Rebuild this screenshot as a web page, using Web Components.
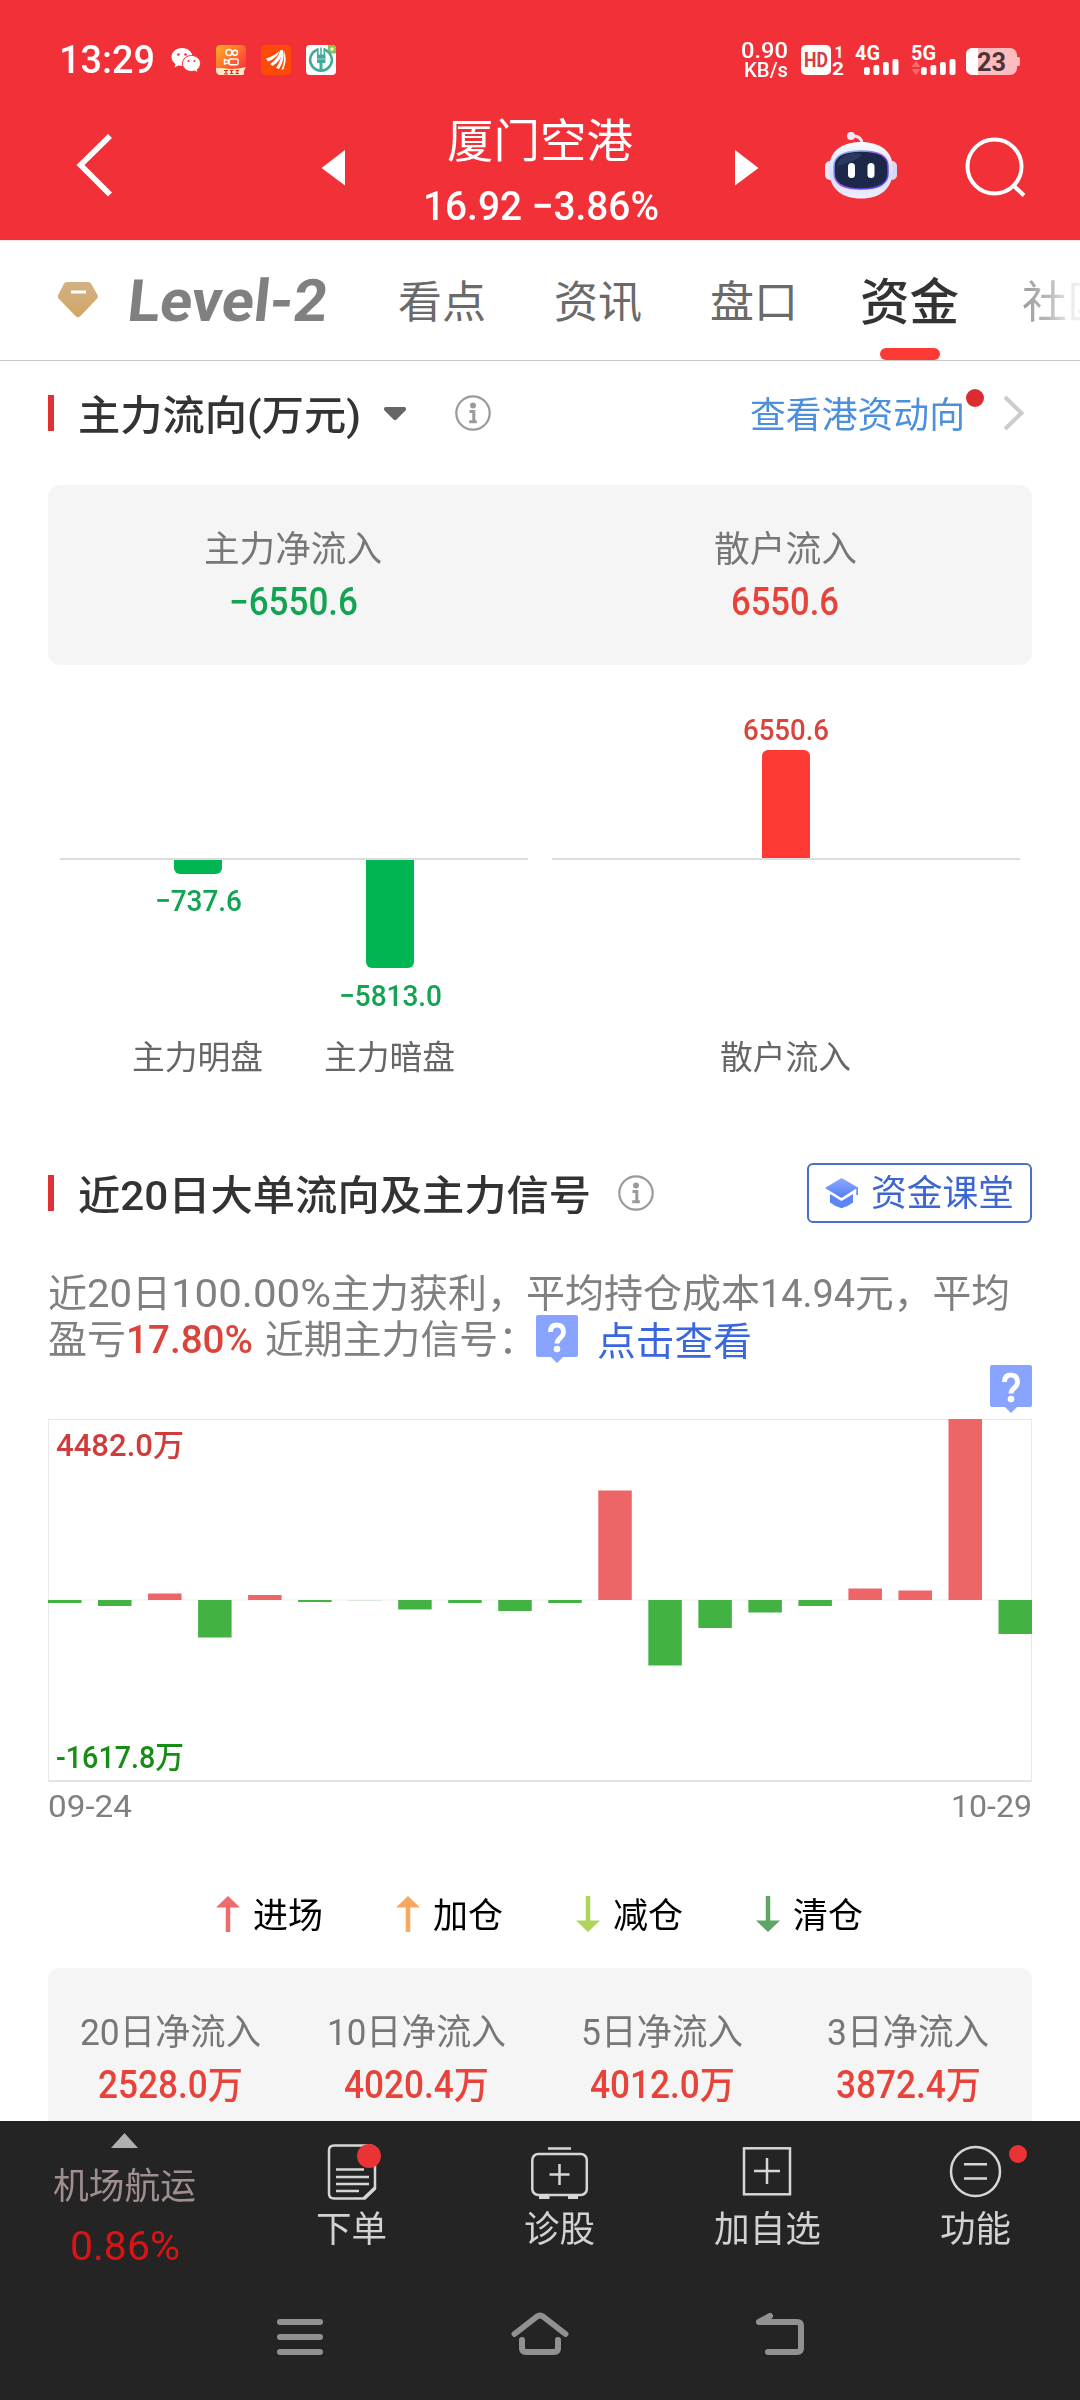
<!DOCTYPE html>
<html lang="zh-CN">
<head>
<meta charset="utf-8">
<title>厦门空港</title>
<style>
html,body{margin:0;padding:0;background:#fff}
body{width:1080px;height:2400px;overflow:hidden;font-family:Roboto,"Noto Sans CJK SC",sans-serif;color:#333}
</style>
</head>
<body>
<stock-page></stock-page>
<script>
const fits = new Set();
function define(name, html, after){
  const t = document.createElement('template');
  t.innerHTML = '<style>*{box-sizing:border-box}svg{display:block;flex:none}</style>' + html;
  customElements.define(name, class extends HTMLElement{
    connectedCallback(){
      if(this.shadowRoot) return;
      this.attachShadow({mode:'open'}).appendChild(t.content.cloneNode(true));
      if(after) after(this, this.shadowRoot);
    }
  });
}

/* Text run squeezed or stretched to the width given in "w". */
customElements.define('fit-text', class extends HTMLElement{
  connectedCallback(){
    if(this.shadowRoot) return;
    this.attachShadow({mode:'open'}).innerHTML =
      '<style>:host{display:block;flex:none;white-space:pre}span{display:inline-block;transform-origin:0 50%}</style><span><slot></slot></span>';
    this.style.width = this.getAttribute('w') + 'px';
    fits.add(this);
  }
  fit(){
    const s = this.shadowRoot.querySelector('span');
    const n = s.offsetWidth;
    const skew = this.getAttribute('skew');
    if(n) s.style.transform = (skew ? 'skewX(' + skew + 'deg) ' : '') + 'scaleX(' + (this.getAttribute('w') / s.getBoundingClientRect().width) + ')';
  }
});

define('status-bar', `
<style>
:host{display:flex;height:120px;align-items:center;color:#fff;padding-left:59px}
.time{font-size:39.500px;font-weight:500;line-height:40px}
.net{margin-left:405px;width:48px;font-weight:500}
</style>
<fit-text class="time" w="96">13:29</fit-text>
<svg width="181" height="120" viewBox="155 0 181 120">
  <g fill="#fff">
    <path d="M182 48c-6 0-10.500 4-10.500 9 0 3 1.500 5.200 4 7l-1 3.500 4-2c1.200.300 2.300.500 3.500.500 6 0 10.500-4 10.500-9s-4.500-9-10.500-9z"/>
    <path d="M191.500 55.500c-5 0-9 3.500-9 8s4 8 9 8c1 0 2-.200 3-.500l3.500 1.800-.800-3c2-1.500 3.300-3.700 3.300-6.300 0-4.500-4-8-9-8z" stroke="#f23038" stroke-width="1"/>
  </g>
  <g fill="#f23038"><circle cx="178.500" cy="54.500" r="1.300"/><circle cx="185.500" cy="54.500" r="1.300"/><circle cx="188.500" cy="61" r="1.100"/><circle cx="194.500" cy="61" r="1.100"/></g>
  <defs>
    <linearGradient id="k" x1="0" y1="0" x2="1" y2="1"><stop offset="0" stop-color="#ffb02a"/><stop offset=".5" stop-color="#ff6b2c"/><stop offset="1" stop-color="#fb2240"/></linearGradient>
    <clipPath id="kc"><rect x="216" y="45" width="30" height="30" rx="4.500"/></clipPath>
  </defs>
  <g clip-path="url(#kc)">
    <rect x="216" y="45" width="30" height="30" fill="url(#k)"/>
    <g fill="none" stroke="#fff" stroke-width="1.500"><circle cx="229" cy="52.500" r="3"/><circle cx="235" cy="52.800" r="2.500"/><rect x="229" y="59" width="9" height="5.800" rx="1.500"/><path d="M224.500 59.500v4.500l4-1v-2.500z"/></g>
    <path d="M216 68q7 0 15 1 8 0 15-2l-2 4v4h-28z" fill="#ffe9c8"/>
    <path d="M224 70.500h4m-2 0v3.500m-2 0h4m2-3.500h3.500m-3.500 3h3.500m-2-3v3m4-3h3.500m-3.500 3h3.500m-2-3v3" stroke="#e0301c" stroke-width="1.200"/>
  </g>
  <rect x="261" y="45" width="30" height="30" rx="4.500" fill="#ff4a07"/>
  <g fill="#fff"><path d="M266 58.500q9-3 14-8-3 8-12 11z"/><path d="M270 64q8-5 10.500-14l2 0q0 10-10 16z"/><path d="M276 68q5.500-8 6-17.500l1-.500q2.500 9-4 19z"/><path d="M281.500 70q3.500-9 2.500-20 3.500 10-.500 19z"/></g>
  <rect x="306" y="45" width="30" height="30" rx="4" fill="#fff"/>
  <path d="M328 45h4q4 0 4 4v4.500h-5l-3-4z" fill="#8bc34a"/><circle cx="332" cy="49" r="1.800" fill="#e7f5d6"/>
  <g fill="none" stroke="#43aa9b"><path d="M318 49.500a10.800 10.800 0 1 0 6 0" stroke-width="2.600"/><path d="M321 47.500v22M317.800 48v7M324.300 48v7" stroke-width="1.500"/><path d="M317.500 55v7.500h7.500v-7.500z" fill="#43aa9b"/><path d="M321 62v9" stroke-width="3"/><path d="M317 59h8" stroke="#b9e4dc" stroke-width=".8"/></g>
</svg>
<div class="net"><fit-text w="47" style="font-size:22.500px;line-height:20px">0.90</fit-text><fit-text w="44" style="font-size:20.500px;line-height:20px;margin-left:3px">KB/s</fit-text></div>
<svg width="290" height="120" viewBox="790 0 290 120" font-family="Roboto,sans-serif" font-weight="700">
  <rect x="801" y="45" width="30" height="30" rx="5" fill="#fff"/>
  <text x="804" y="67.300" font-size="20" fill="#d93a42" textLength="24" lengthAdjust="spacingAndGlyphs">HD</text>
  <g fill="#fff"><text x="834.500" y="57.500" font-size="16" textLength="9" lengthAdjust="spacingAndGlyphs">1</text><text x="832" y="75" font-size="17.500" textLength="12" lengthAdjust="spacingAndGlyphs">2</text>
  <text x="855" y="60" font-size="20.500" textLength="25" lengthAdjust="spacingAndGlyphs">4G</text>
  <text x="911" y="60" font-size="20.500" textLength="25" lengthAdjust="spacingAndGlyphs">5G</text>
  <rect x="864" y="67" width="5.800" height="8" rx="2"/><rect x="873.500" y="65" width="5.800" height="10" rx="2"/><rect x="883" y="62" width="5.800" height="13" rx="2"/><rect x="892.500" y="59" width="6" height="16" rx="2"/>
  <rect x="921" y="67" width="5.800" height="8" rx="2"/><rect x="930.500" y="65" width="5.800" height="10" rx="2"/><rect x="940" y="62" width="5.800" height="13" rx="2"/><rect x="949.500" y="59" width="6" height="16" rx="2"/></g>
  <path d="M911.500 67l4.500-6 4.500 6zM911.500 69l4.500 6 4.500-6z" fill="#ff6a6e"/>
  <path d="M1017 57h1.500q1.500 0 1.500 1.500v6q0 1.500-1.500 1.500H1017z" fill="#ffbcbf"/>
  <rect x="966" y="48" width="51" height="27" rx="7" fill="#ffbcbf"/>
  <path d="M978 48v27h-5q-7 0-7-7v-13q0-7 7-7z" fill="#fff"/>
  <text x="977" y="71" font-size="25" fill="#4b3337" textLength="29" lengthAdjust="spacingAndGlyphs">23</text>
</svg>`, (el, r) => {
  r.lastElementChild.style.marginLeft = (790 - 59 - 96 - 181 - 405 - 48) + 'px';
});

define('stock-header', `
<style>
:host{display:flex;height:120px;color:#fff}
.c{width:234px;display:flex;flex-direction:column;align-items:center}
.n{font-size:46px;line-height:42px;font-weight:400;margin-left:-5px}
.p{font-size:41px;line-height:40px;margin-top:24px;margin-left:-2px;font-weight:500}
</style>
<svg width="425" height="120" viewBox="0 120 425 120"><path d="M110 136L80.500 165 110 194.500" fill="none" stroke="#fff" stroke-width="5.600"/><path d="M345 150v35.500L321.500 168z" fill="#fff"/></svg>
<div class="c"><fit-text class="n" w="186"><slot name="name"></slot></fit-text><fit-text class="p" w="236"><slot name="price"></slot></fit-text></div>
<svg width="421" height="120" viewBox="659 120 421 120">
  <defs><linearGradient id="h" x1="0" y1="0" x2="0" y2="1"><stop offset="0" stop-color="#f8fbff"/><stop offset=".6" stop-color="#d9dcf6"/><stop offset="1" stop-color="#eef0ff"/></linearGradient>
  <linearGradient id="v" x1="0" y1="0" x2="1" y2="1"><stop offset="0" stop-color="#7fd3ff"/><stop offset=".5" stop-color="#a04df0"/><stop offset="1" stop-color="#3a46d8"/></linearGradient></defs>
  <path d="M735 150v35.500L758.500 168z" fill="#fff"/>
  <path d="M853 136q9 0 9 8" fill="none" stroke="#f3dff0" stroke-width="3"/><circle cx="851" cy="136" r="4" fill="#f1e7f6"/>
  <rect x="825" y="161" width="12" height="19" rx="5" fill="#e6eafb"/><rect x="885" y="161" width="12" height="19" rx="5" fill="#d6d8f4"/>
  <path d="M861 142c19 0 32 9 32 27 0 20-13 29.500-32 29.500s-32-9.500-32-29.500c0-18 13-27 32-27z" fill="url(#h)"/>
  <path d="M861 151q27 0 27 15v7q0 16-27 16t-27-16v-7q0-15 27-15z" fill="#1d2748" stroke="url(#v)" stroke-width="1.500"/>
  <path d="M837 166q3-12 16-13 14 0 4 6-8 4-20 7z" fill="#39446f" opacity=".6"/>
  <rect x="848" y="163" width="7" height="15" rx="3.500" fill="#fff"/><rect x="867.500" y="163" width="7" height="15" rx="3.500" fill="#fff"/>
  <circle cx="994.500" cy="166.500" r="27" fill="none" stroke="#fff" stroke-width="4"/><path d="M1013.500 185.500l10.500 10" stroke="#fff" stroke-width="4.200"/>
</svg>`);

define('tab-strip', `
<style>
:host{display:flex;height:121px;border-top:1px solid #ffe3e5;border-bottom:1px solid #c6c6c6;overflow:hidden;background:#fff}
.t{height:119px;display:flex;align-items:center;padding-top:4px;font-size:44px;line-height:60px;color:#6a6a6a;position:relative;flex:none}
.lv{font-size:58.500px;font-weight:700;color:#808080;margin-left:28px;margin-right:70px;padding-top:0}
.on{font-size:50px;font-weight:500;color:#333}
.on::after{content:"";position:absolute;left:20px;bottom:0;width:60px;height:12px;border-radius:6px;background:#fc3a33}
.last{-webkit-mask-image:linear-gradient(90deg,#000a 0,#0007 30%,#0001 62%,transparent 70%);mask-image:linear-gradient(90deg,#000a 0,#0007 30%,#0002 55%,#0001 70%)}
</style>
<svg width="100" height="119" viewBox="0 241 100 119"><defs><linearGradient id="g" x1="0" y1="0" x2="0" y2="1"><stop offset="0" stop-color="#d2b184"/><stop offset="1" stop-color="#d3a566"/></linearGradient></defs><path d="M67 282h21q2 0 3 1.500l6.500 11.500q1 2-.300 3.500L80 316.500q-2 1.500-4 0L58.500 298.500q-1.200-1.500-.300-3.500L64 283.500q1-1.500 3-1.500z" fill="url(#g)"/><path d="M71 292h15" stroke="#fff" stroke-width="3"/></svg>
<div class="t lv"><fit-text w="200" skew="-6">Level-2</fit-text></div>
<div class="t"><fit-text w="88">看点</fit-text></div>
<div class="t" style="margin-left:68px"><fit-text w="88">资讯</fit-text></div>
<div class="t" style="margin-left:68px"><fit-text w="88">盘口</fit-text></div>
<div class="t on" style="margin-left:62px"><fit-text w="99">资金</fit-text></div>
<div class="t last" style="margin-left:63px"><fit-text w="90">社区</fit-text></div>`);

define('section-title', `
<style>
:host{display:flex;height:104px;align-items:center;padding:0 48px}
i{width:6px;height:36px;background:#e03134;margin-right:24px}
fit-text{font-size:41px;font-weight:500;line-height:60px;color:#333;padding-top:5px}
.sp{flex:1}
</style>
<i></i><fit-text><slot></slot></fit-text><slot name="icon"></slot>
<svg class="info" width="36" height="36" viewBox="-18 -18 36 36"><g fill="none" stroke="#9a9a9a"><circle r="16.700" stroke-width="2.200"/><path d="M-3.500 -1.500H.8V8.500M-3.800 8.800H3.800" stroke-width="3"/></g><circle cy="-7.500" r="3" fill="#9a9a9a"/></svg>
<span class="sp"></span><slot name="action"></slot>`, (el, r) => {
  const f = r.querySelector('fit-text');
  f.setAttribute('w', el.getAttribute('w'));
  f.style.width = el.getAttribute('w') + 'px';
  r.querySelector('.info').style.marginLeft = el.getAttribute('gap') + 'px';
});

define('drop-arrow', `<style>:host{display:block;margin-left:22px}</style>
<svg width="24" height="15" viewBox="383 406 24 15"><path d="M385.500 407h19q2.500 1 1 3.500l-9 9q-1.500 1.300-3 0l-9-9q-1.500-2.500 1-3.500z" fill="#666"/></svg>`);

define('link-more', `
<style>:host{display:flex;align-items:center;color:#4c8fdc;font-size:36px;line-height:60px;margin-right:-8px}fit-text{padding-top:5px}</style>
<fit-text w="215">查看港资动向</fit-text>
<svg width="75" height="104" viewBox="965 361 75 104"><circle cx="975" cy="398" r="9" fill="#dd2c2f"/><path d="M1005 397l16.500 16L1005 429" fill="none" stroke="#ccc" stroke-width="4"/></svg>`);

define('class-button', `
<style>:host{box-sizing:border-box;display:flex;width:225px;height:60px;border:2px solid #486fc9;border-radius:6px;align-items:center;padding-left:15px;color:#3d66d3;font-size:36px;line-height:56px}fit-text{margin-left:12px;padding-top:1px}</style>
<svg width="35" height="34" viewBox="824 1176 35 34"><defs><linearGradient id="c" x1="0" y1="0" x2="0" y2="1"><stop offset="0" stop-color="#8eabff"/><stop offset="1" stop-color="#527df0"/></linearGradient></defs><path d="M841.500 1178l16.500 9.500v7.500h-1.700v-6.500l-14.800 9.500-16.500-10z" fill="url(#c)"/><path d="M830 1194l11.500 7 11.500-7v8.500q-5 4-11.500 5.800-6.500-1.800-11.500-5.800z" fill="#5c86f6"/></svg>
<fit-text w="143">资金课堂</fit-text>`);

define('flow-stat', `
<style>:host{display:flex;flex-direction:column;align-items:center;width:var(--col);line-height:40px;color:#777;font-size:36px}
fit-text{position:relative;left:-1px}
.v{font-size:38px;font-weight:500;margin-top:var(--gap,12px);color:var(--tone,#e8433a)}</style>
<fit-text class="l"><slot></slot></fit-text><fit-text class="v"><slot name="value"></slot></fit-text>`, (el, r) => {
  for (const [c,a] of [['.l','lw'],['.v','vw']]) {
    const f = r.querySelector(c);
    f.setAttribute('w', el.getAttribute(a));
    f.style.width = el.getAttribute(a) + 'px';
  }
});

define('stat-card', `
<style>:host{box-sizing:border-box;display:flex;margin:0 48px;background:#f5f5f5;border-radius:12px}</style><slot></slot>`);

define('flow-bars', `
<style>
:host{display:flex;gap:24px;padding:0 60px}
.p{width:468px}
.r{display:flex;justify-content:center}
.up{height:193px;align-items:flex-end}
.ax{height:2px;background:#dcdcdc}
.dn{height:180px}
.c{width:192px;display:flex;flex-direction:column;align-items:center;font-size:30px;line-height:30px;font-weight:500}
.b{width:48px;background:#00b652;border-radius:0 0 6px 6px}
.rb{background:#fc3a33;border-radius:6px 6px 0 0;height:108px;margin-top:5px}
.g{color:#13a452}.d{color:#d9453c}
.n{font-size:32.500px;line-height:36px;color:#666;font-weight:400}
.n fit-text{margin-left:-2px}
</style>
<div class="p"><div class="r up"></div><div class="ax"></div>
<div class="r dn"><div class="c g"><div class="b" style="height:14px;margin-bottom:12px"></div><fit-text w="87">−737.6</fit-text></div>
<div class="c g"><div class="b" style="height:108px;margin-bottom:13px"></div><fit-text w="103">−5813.0</fit-text></div></div>
<div class="r"><div class="c n"><fit-text w="131">主力明盘</fit-text></div><div class="c n"><fit-text w="131">主力暗盘</fit-text></div></div></div>
<div class="p"><div class="r up"><div class="c d"><fit-text w="86">6550.6</fit-text><div class="b rb"></div></div></div><div class="ax"></div><div class="r dn"></div>
<div class="r"><div class="c n"><fit-text w="131">散户流入</fit-text></div></div></div>`);

define('help-badge', `<style>:host{display:block;flex:none;width:42px;height:48px}</style>
<svg width="42" height="48" viewBox="0 0 42 48"><path d="M2 0h38q2 0 2 2v38q0 2-2 2H27l-6 6-6-6H2q-2 0-2-2V2q0-2 2-2z" fill="#88a4ff"/><path d="M14.500 17q0-7 6.500-7t6.500 7q0 3-3.200 6-3.300 2.500-3.300 5.500" fill="none" stroke="#fff" stroke-width="4.800"/><circle cx="21" cy="34" r="3.300" fill="#fff"/></svg>`);

define('cost-note', `
<style>
:host{display:block;margin:26px 48px 0;font-size:39px;line-height:46px;color:#808080;height:93px}
div{display:flex;height:46px}
.r{color:#d9453c;font-weight:500}.b{color:#3a66e0}
</style>
<div><fit-text w="39">近</fit-text><fit-text w="45">20</fit-text><fit-text w="39">日</fit-text><fit-text w="160">100.00%</fit-text><fit-text w="429">主力获利，平均持仓成本</fit-text><fit-text w="95">14.94</fit-text><fit-text w="155">元，平均</fit-text></div>
<div><fit-text w="78">盈亏</fit-text><fit-text class="r" w="127">17.80%</fit-text><fit-text w="272" style="margin-left:12px">近期主力信号：</fit-text><help-badge style="margin:-2px 0 0 -1px"></help-badge><fit-text class="b" w="155" style="margin-left:19px;padding-top:2px">点击查看</fit-text></div>`);

define('signal-chart', `
<style>
:host{display:block;margin:1px 48px 0;font-size:31px}
.q{display:flex;justify-content:flex-end;height:54px}
.box{height:363px;border:1px solid #e9e9e9;border-bottom:2px solid #e4e4e4;position:relative}
.box svg{margin:-1px}
.box fit-text{position:absolute;left:7px;line-height:36px;font-weight:500}
.d{display:flex;justify-content:space-between;height:49px;line-height:50px;font-size:30.500px;color:#808080}
</style>
<div class="q"><help-badge></help-badge></div>
<div class="box"><svg width="984" height="362" viewBox="0 0 984 362"></svg>
<fit-text w="128" style="top:8px;color:#cf3c3c">4482.0万</fit-text><fit-text w="128" style="bottom:4px;color:#178c17">-1617.8万</fit-text></div>
<div class="d"><fit-text w="84">09-24</fit-text><fit-text w="81">10-29</fit-text></div>`, (el, r) => {
  const v = [-3,-6,6.5,-37.5,5,-2,0,-9.5,-3,-11,-3,109.5,-65.5,-28,-12.5,-6,11.5,9.5,181,-34];
  let s = '<path d="M0 181h984" stroke="#eee"/>';
  v.forEach((h, i) => {
    const x = i * 950.5 / 19;
    s += '<rect x="' + x + '" width="33.500" y="' + (h > 0 ? 181 - h : 181) + '" height="' + (Math.abs(h) || 1) + '" fill="' + (h > 0 ? '#ee6568' : h < 0 ? '#42b342' : '#dbe8db') + '"/>';
  });
  r.querySelector('svg').innerHTML = s;
});

define('legend-item', `
<style>:host{display:flex;width:180px;height:40px;align-items:center;font-size:35px;line-height:40px;color:#000}fit-text{margin-left:12px;padding-top:5px}</style>
<svg width="25" height="40" viewBox="0 0 25 40"><path fill="none" stroke-width="4.500"/><path class="h"/></svg><fit-text w="70"><slot></slot></fit-text>`, (el, r) => {
  const [l, h] = r.querySelectorAll('path'), c = el.getAttribute('color'), up = el.hasAttribute('up');
  l.setAttribute('stroke', c); h.setAttribute('fill', c);
  l.setAttribute('d', up ? 'M12 12V38' : 'M12 2V28');
  h.setAttribute('d', up ? 'M0 13.500L12 2l12 11.500z' : 'M0 26.500L12 38l12-11.500z');
});

define('tool-item', `
<style>:host{display:flex;flex-direction:column;align-items:center;width:208px;font-size:36px;line-height:40px;color:#d2d2d2}fit-text{margin-top:2px;margin-left:-1px}</style>
<slot name="icon"></slot><fit-text><slot></slot></fit-text>`, (el, r) => {
  const f = r.querySelector('fit-text');
  f.setAttribute('w', el.getAttribute('w'));
  f.style.width = el.getAttribute('w') + 'px';
});

define('tool-bar', `
<style>
:host{display:flex;height:159px;background:#242424}
.f{width:248px;display:flex;flex-direction:column;align-items:center;line-height:40px;font-size:36px;color:#9f8f8f}
.f .p{font-size:40px;color:#d81414;margin-top:20px;margin-left:2px}
tool-item svg{fill:none;stroke:#d6d6d6;stroke-width:2.500}
.dot{fill:#ea3334;stroke:none}
</style>
<div class="f"><svg width="248" height="46" viewBox="0 2121 248 46"><path d="M111 2148l13.500-15 13.500 15z" fill="#b0b0b0"/></svg><fit-text w="143">机场航运</fit-text><fit-text class="p" w="110">0.86%</fit-text></div>
<tool-item w="71"><svg slot="icon" width="208" height="87" viewBox="248 2121 208 87"><path d="M334 2145.500h36q5 0 5 5v38l-10.500 10h-30.500q-5 0-5-5v-43q0-5 5-5zM336 2169.500h28M336 2177h33M336 2184h33M336 2191h23"/><path d="M375 2188l-11 10.500" stroke-width="3.500"/><circle class="dot" cx="369" cy="2156" r="12"/></svg>下单</tool-item>
<tool-item w="71"><svg slot="icon" width="208" height="87" viewBox="456 2121 208 87"><rect x="532.300" y="2154" width="54.500" height="41" rx="6"/><path d="M548 2148.500h23M559.500 2164v21M549.500 2174.500h20"/><path d="M539 2197h10.500M568 2197h10" stroke-width="4"/></svg>诊股</tool-item>
<tool-item w="107"><svg slot="icon" width="208" height="87" viewBox="664 2121 208 87"><rect x="744" y="2148.300" width="46" height="46"/><path d="M767 2158v26M754 2171h26"/></svg>加自选</tool-item>
<tool-item w="71"><svg slot="icon" width="208" height="87" viewBox="872 2121 208 87"><circle cx="975.500" cy="2171.500" r="24.500"/><path d="M964 2164.300h23M964 2178.500h23"/><circle class="dot" cx="1018" cy="2154" r="9"/></svg>功能</tool-item>`);

define('nav-bar', `
<style>:host{display:block;height:120px;background:#242424}</style>
<svg width="1080" height="120" viewBox="0 2280 1080 120" fill="none" stroke="#919191" stroke-width="6" stroke-linecap="round" stroke-linejoin="round"><path d="M280 2322h40M280 2337h40M280 2352h40"/><path d="M514.500 2334L537 2316.500q3-2 6 0L565.500 2334M522 2340v8q0 4 4 4h28q4 0 4-4v-8"/><path d="M770 2316l-11 6h38q4 0 4 4v22q0 4-4 4h-29"/></svg>`);

define('stock-page', `
<style>
:host{display:flex;flex-direction:column;width:1080px;height:2400px;background:#fff;overflow:hidden}
header{background:#f23038;height:240px}
.legend{display:flex;padding-left:216px;margin-top:63px;height:40px}
</style>
<header><status-bar></status-bar><stock-header><span slot="name">厦门空港</span><span slot="price">16.92 −3.86%</span></stock-header></header>
<tab-strip></tab-strip>
<section-title w="283" gap="48">主力流向(万元)<drop-arrow slot="icon"></drop-arrow><link-more slot="action"></link-more></section-title>
<stat-card style="height:180px;margin-top:20px;padding-top:45px;--col:492px">
<flow-stat lw="178" vw="129" style="--tone:#13a452">主力净流入<span slot="value">−6550.6</span></flow-stat>
<flow-stat lw="143" vw="108">散户流入<span slot="value">6550.6</span></flow-stat></stat-card>
<flow-bars></flow-bars>
<section-title w="513" gap="27" style="margin-top:65px">近20日大单流向及主力信号<class-button slot="action"></class-button></section-title>
<cost-note></cost-note>
<signal-chart></signal-chart>
<div class="legend"><legend-item up color="#f16b6d">进场</legend-item><legend-item up color="#f8a75e">加仓</legend-item><legend-item color="#afd45c">减仓</legend-item><legend-item color="#5fa666">清仓</legend-item></div>
<stat-card style="height:153px;margin-top:34px;padding-top:45px;border-radius:12px 12px 0 0;--col:246px;--gap:12px">
<flow-stat lw="181" vw="145">20日净流入<span slot="value">2528.0万</span></flow-stat>
<flow-stat lw="179" vw="145">10日净流入<span slot="value">4020.4万</span></flow-stat>
<flow-stat lw="162" vw="145">5日净流入<span slot="value">4012.0万</span></flow-stat>
<flow-stat lw="162" vw="145">3日净流入<span slot="value">3872.4万</span></flow-stat></stat-card>
<tool-bar></tool-bar>
<nav-bar></nav-bar>`);

fits.forEach(f => f.fit());
</script>
</body>
</html>
